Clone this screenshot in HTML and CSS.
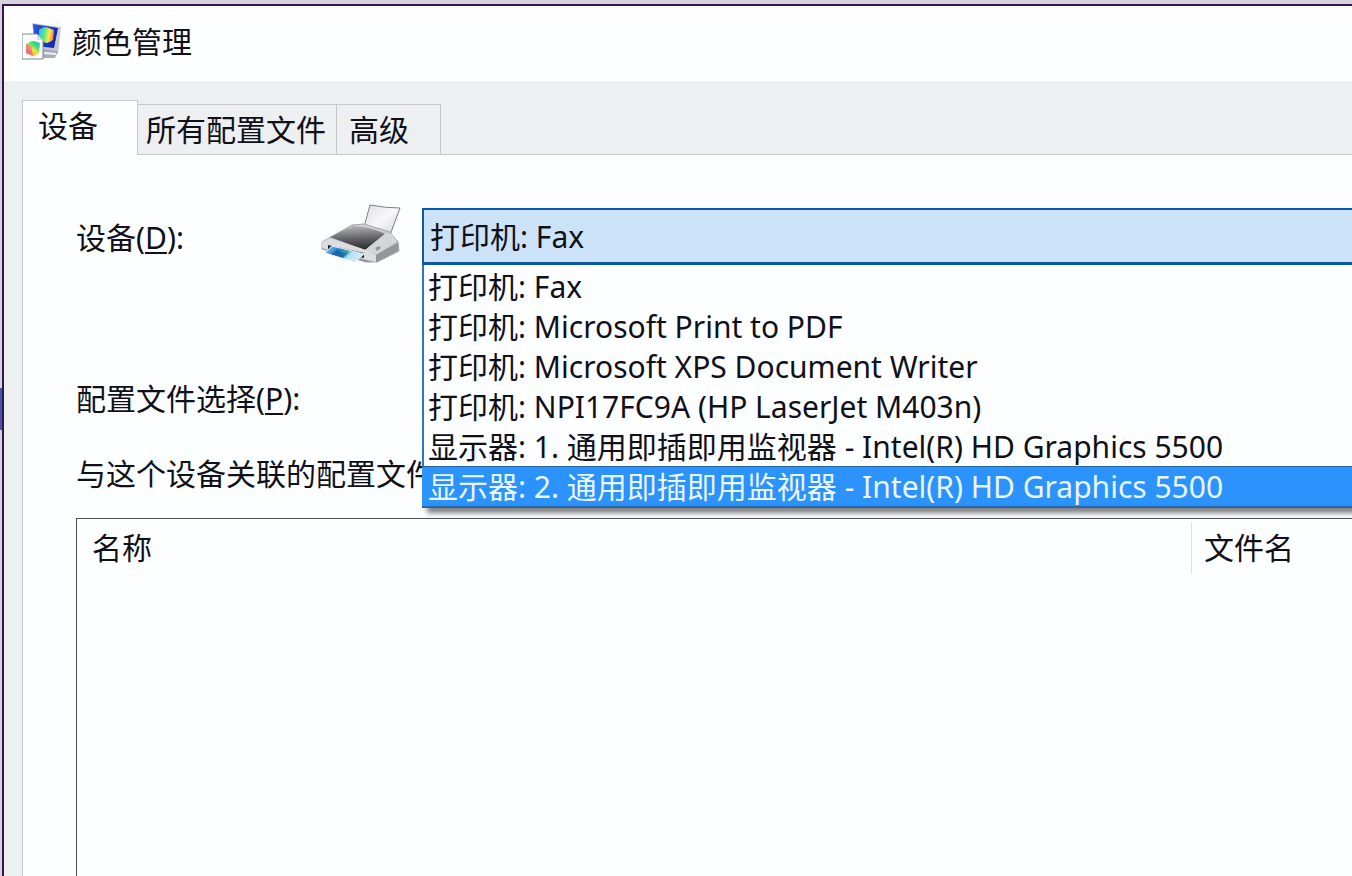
FILE: index.html
```
<!DOCTYPE html>
<html lang="zh-CN">
<head>
  <meta charset="UTF-8">
  <title>颜色管理</title>
  <link rel="stylesheet" href="styles.css">
</head>
<body>
  <div class="backdrop-mark"></div>

  <div class="window">
    <header class="title-bar">
      <svg class="app-icon" viewBox="0 0 40 40" aria-hidden="true">
        <defs>
          <linearGradient id="screen" x1="0" y1="0" x2="1" y2="0.3">
            <stop offset="0" stop-color="#2a5cd8"/>
            <stop offset="1" stop-color="#1226b4"/>
          </linearGradient>
          <linearGradient id="hueA" x1="0" y1="0.4" x2="1" y2="0.6">
            <stop offset="0" stop-color="#28c8f4"/>
            <stop offset="0.35" stop-color="#58e880"/>
            <stop offset="0.65" stop-color="#ffe850"/>
            <stop offset="1" stop-color="#ff7048"/>
          </linearGradient>
          <linearGradient id="hueB" x1="0.9" y1="0" x2="0.2" y2="1">
            <stop offset="0" stop-color="#28b4f4"/>
            <stop offset="0.3" stop-color="#38dc78"/>
            <stop offset="0.6" stop-color="#f4e840"/>
            <stop offset="1" stop-color="#ff8030"/>
          </linearGradient>
        </defs>
        <path d="M10 1 L39 5 L36 32 L13 28 Z" fill="#c4c8d6"/>
        <path d="M11 2 L36 6 L32 26 L13 24 Z" fill="url(#screen)"/>
        <path d="M21 27 L36 29 L33 36 L20 36 Z" fill="#a9acb6"/>
        <path d="M22 31 L34 32" stroke="#f0f0f4" stroke-width="2"/>
        <path d="M17 8 Q20 5 24 5 L32 8 L31 18 Q28 20 25 21 L17 19 Z" fill="url(#hueA)"/>
        <path d="M0 12 L15 12 L21 18 L21 37 L0 37 Z" fill="#fcfcfd" stroke="#85868c" stroke-width="1"/>
        <path d="M15 12 L15 18 L21 18" fill="#dcdce2"/>
        <path d="M4 22 Q8 19 12 19 L18 21 L17 31 Q14 34 11 34 L4 31 Z" fill="url(#hueB)"/>
        <path d="M4 22 L9 24 L11 34 L4 31 Z" fill="#f0489c" opacity="0.6"/>
      </svg>
      <h1 class="title">颜色管理</h1>
    </header>

    <nav class="tabs" role="tablist">
      <button type="button" class="tab active" role="tab" aria-selected="true">设备</button>
      <button type="button" class="tab files" role="tab">所有配置文件</button>
      <button type="button" class="tab advanced" role="tab">高级</button>
    </nav>

    <main class="panel">
      <div class="device-row">
        <label class="label" for="device">设备(<u>D</u>):</label>
        <svg class="printer" viewBox="0 0 84 64" aria-hidden="true">
          <defs>
            <linearGradient id="paper" x1="0" y1="0" x2="1" y2="1">
              <stop offset="0" stop-color="#dcdce2"/>
              <stop offset="0.5" stop-color="#f8f8fb"/>
              <stop offset="1" stop-color="#d0d0d6"/>
            </linearGradient>
            <linearGradient id="lid" x1="0.4" y1="0" x2="0.5" y2="1">
              <stop offset="0" stop-color="#b4b4b8"/>
              <stop offset="0.5" stop-color="#66666a"/>
              <stop offset="1" stop-color="#29292d"/>
            </linearGradient>
            <linearGradient id="side" x1="0" y1="0" x2="0" y2="1">
              <stop offset="0" stop-color="#d8d8dc"/>
              <stop offset="1" stop-color="#88898f"/>
            </linearGradient>
            <linearGradient id="photo" x1="0" y1="0" x2="1" y2="0.4">
              <stop offset="0" stop-color="#9cd4f8"/>
              <stop offset="0.4" stop-color="#2474c8"/>
              <stop offset="0.6" stop-color="#38a890"/>
              <stop offset="0.75" stop-color="#b4e4f8"/>
              <stop offset="1" stop-color="#cceaf8"/>
            </linearGradient>
          </defs>
          <path d="M50 3 Q66 6 80 6 L70 33 L44 25 Z" fill="url(#paper)" stroke="#7d7e84" stroke-width="1"/>
          <path d="M2 40 L32 23 L44 22 L70 30 L78 40 L79 49 L57 60 L46 60 L2 47 Z" fill="url(#side)" stroke="#a2a3a8" stroke-width="1"/>
          <path d="M10 35 L33 24 Q48 24 65 32 L45 48 Z" fill="url(#lid)"/>
          <path d="M45 48 L66 31 L72 32 L77 40 L56 53 Z" fill="#d4d5d9"/>
          <path d="M56 53 L78 41 L78 48 L57 60 Z" fill="#94959b"/>
          <path d="M2 40 L10 36 L46 48 L56 53 L56 60 L46 58 L2 46 Z" fill="#dcdde1"/>
          <path d="M8 43 L44 51 L44 56 L8 49 Z" fill="#282a30"/>
          <path d="M12 44 L44 52 L35 60 L5 51 Z" fill="url(#photo)" stroke="#e8f4fa" stroke-width="1"/>
          <path d="M17 48 Q22 53 29 50 L23 56 L11 52 Z" fill="#1458b0" opacity="0.7"/>
          <path d="M55 46 L59 44 L61 46 L57 49 Z" fill="#94959a"/>
        </svg>
        <div class="combo">
          <select class="combo-box" id="device">
            <option>打印机: Fax</option>
          </select>
          <ul class="combo-list" role="listbox">
            <li role="option">打印机: Fax</li>
            <li role="option">打印机: Microsoft Print to PDF</li>
            <li role="option">打印机: Microsoft XPS Document Writer</li>
            <li role="option">打印机: NPI17FC9A (HP LaserJet M403n)</li>
            <li role="option">显示器: 1. 通用即插即用监视器 - Intel(R) HD Graphics 5500</li>
            <li role="option" class="selected" aria-selected="true">显示器: 2. 通用即插即用监视器 - Intel(R) HD Graphics 5500</li>
          </ul>
        </div>
      </div>

      <p class="label profile-label">配置文件选择(<u>P</u>):</p>
      <p class="label list-label">与这个设备关联的配置文件</p>

      <div class="list-view">
        <table class="profiles">
          <thead>
            <tr>
              <th>名称</th>
              <th class="file-col">文件名</th>
            </tr>
          </thead>
        </table>
      </div>
    </main>
  </div>
</body>
</html>
```
FILE: styles.css
```
* {
  box-sizing: border-box;
}

body {
  margin: 0;
  height: 100vh;
  padding: 4px 0 0 2px;
  display: flex;
  overflow: hidden;
  background: #d8d2de;
  color: #101018;
  font-family: "Noto Sans", "Noto Sans CJK SC", sans-serif;
  font-size: 30px;
  line-height: 40px;
}

/* sliver of the window behind */
.backdrop-mark {
  position: absolute;
  left: 0;
  top: 388px;
  width: 2px;
  height: 42px;
  background: #4656a4;
}

.window {
  flex: 1;
  min-width: 0;
  display: flex;
  flex-direction: column;
  border: 2px solid #35164a;
  border-width: 2px 0 0 2px;
  background: #eeeff0;
}

.title-bar {
  display: flex;
  align-items: center;
  gap: 10px;
  height: 75px;
  padding: 0 0 3px 18px;
  background: #fdfeff;
}

.app-icon {
  width: 40px;
  height: 40px;
}

.title {
  margin: 0;
  font-size: 30px;
  font-weight: 400;
}

.tabs {
  display: flex;
  align-items: flex-end;
  padding: 19px 0 0 18px;
}

.tab {
  height: 50px;
  margin: 0;
  padding: 0 0 0 8px;
  border: 1px solid #c4c8ca;
  border-left: 0;
  border-bottom: 0;
  background: #eeeff0;
  color: inherit;
  font: inherit;
  text-align: left;
}

.tab.active {
  position: relative;
  z-index: 1;
  width: 116px;
  height: 55px;
  margin-bottom: -1px;
  padding: 0 0 4px 15px;
  border-left: 1px solid #c4c8ca;
  background: #fdfeff;
}

.tab.files {
  width: 199px;
}

.tab.advanced {
  width: 104px;
  padding-left: 12px;
}

.panel {
  flex: 1;
  display: flex;
  flex-direction: column;
  margin-left: 18px;
  padding: 53px 0 0 53px;
  border: 1px solid #c4c8ca;
  border-width: 1px 0 0 1px;
  background: #fdfeff;
}

.device-row {
  display: flex;
  align-items: flex-start;
}

.device-row .label {
  width: 244px;
  padding-top: 10px;
}

.label {
  margin: 0;
  white-space: nowrap;
}

.label u {
  text-decoration-thickness: 2px;
  text-underline-offset: 3px;
}

.printer {
  width: 84px;
  height: 64px;
  margin: -6px 18px 0 0;
}

.combo {
  position: relative;
  flex: 1;
}

.combo-box {
  display: block;
  appearance: none;
  width: 100%;
  height: 57px;
  padding: 2px 6px 0;
  border: 2px solid #0a58a8;
  border-width: 2px 0 3px 2px;
  border-radius: 0;
  background: #cce2f8;
  color: inherit;
  font: inherit;
}

/* open drop-down, lies over the labels below */
.combo-list {
  position: absolute;
  top: 57px;
  left: 0;
  right: 0;
  z-index: 2;
  margin: 0;
  padding: 2px 0 0;
  border-left: 2px solid #2a78c4;
  background: #fdfeff;
  box-shadow: 5px 5px 5px rgba(0, 0, 0, 0.5);
  list-style: none;
}

.combo-list li {
  height: 40px;
  padding-left: 4px;
  white-space: nowrap;
}

.combo-list .selected {
  height: 42px;
  margin: -1px 0 0 -2px;
  padding-left: 6px;
  border: 1px solid #2568ac;
  border-width: 1px 0 2px;
  background: #2c92fc;
  color: #e8f6ff;
}

.profile-label {
  margin-top: 113px;
}

.list-label {
  margin-top: 35px;
}

.list-view {
  flex: 1;
  margin-top: 24px;
  padding-top: 3px;
  border: 1px solid #4c4a5c;
  border-width: 1px 0 0 1px;
}

.profiles {
  width: 100%;
  border-spacing: 0;
}

.profiles th {
  height: 52px;
  padding: 0 0 0 15px;
  font-weight: 400;
  text-align: left;
}

.profiles .file-col {
  width: 161px;
  padding-left: 12px;
  border-left: 1px solid #dfe1e6;
}
```
